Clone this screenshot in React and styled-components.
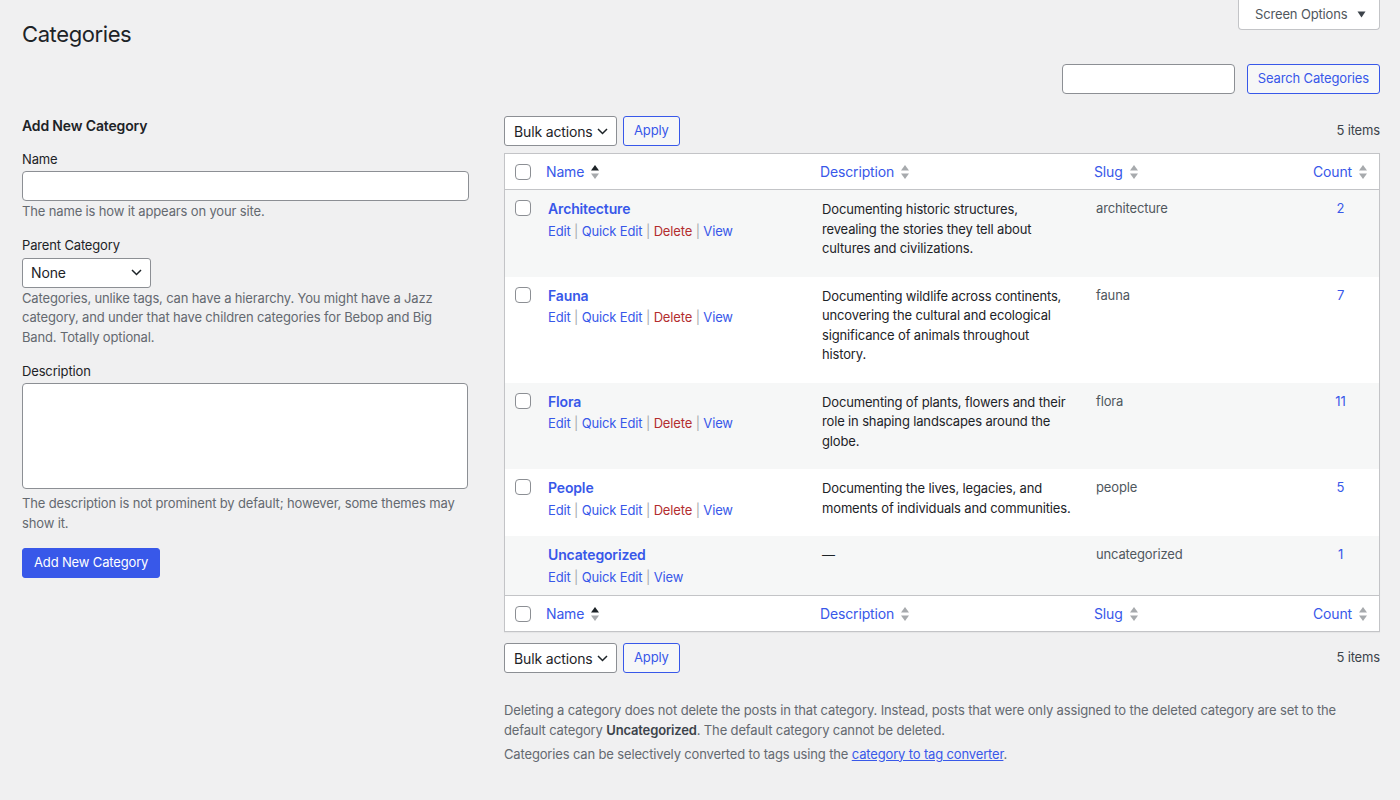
import React from 'react';
import styled, { createGlobalStyle } from 'styled-components';

// --- TOKENS ---
const c = {
  bg: '#f0f0f1',
  text: '#1d2327',
  body: '#3c434a',
  muted: '#646970',
  slug: '#50575e',
  link: '#3858e9',
  danger: '#b32d2e',
  border: '#c3c4c7',
  field: '#8c8f94',
  stripe: '#f6f7f7',
  sep: '#a7aaad',
};

const GlobalStyle = createGlobalStyle`
  * { box-sizing: border-box; }
  body {
    margin: 0; background: ${c.bg}; color: ${c.body};
    font-family: Inter, "Noto Sans", "Liberation Sans", sans-serif; font-size: 13px;
    line-height: 1.5; letter-spacing: -0.15px;
  }
  button, input, textarea { letter-spacing: inherit; }
`;

// --- STYLED COMPONENTS ---
const Page = styled.div` padding: 0 20px 40px 22px; min-height: 800px; `;
const TopRow = styled.div` display: flex; justify-content: space-between; align-items: flex-start; `;
const Title = styled.h1`
  margin: 19px 0 0; font-size: 22px; font-weight: 400; line-height: 30px; color: ${c.text};
  letter-spacing: -0.4px;
`;
const ScreenOptions = styled.button`
  display: flex; align-items: center; gap: 10px; height: 30px; width: 142px;
  padding: 0 0 0 16px; background: #fff; border: 1px solid ${c.border}; border-top: none;
  border-radius: 0 0 4px 4px; color: ${c.slug}; font: inherit; font-size: 13px;
`;
const SearchRow = styled.div` display: flex; justify-content: flex-end; gap: 12px; margin-top: 15px; `;
const TextInput = styled.input`
  height: ${p => p.$h || 30}px; width: ${p => p.$w || '100%'};
  border: 1px solid ${c.field}; border-radius: 4px; background: #fff;
  font: inherit; font-size: 14px; padding: 0 8px; display: block;
`;
const SecondaryButton = styled.button`
  height: 30px; padding: 0 ${p => p.$pad || 10}px; border: 1px solid ${c.link}; border-radius: 3px;
  background: ${c.stripe}; color: ${c.link}; font: inherit; font-size: 13px;
`;
const PrimaryButton = styled.button`
  height: 30px; padding: 0 11px; border: 1px solid ${c.link}; border-radius: 3px;
  background: ${c.link}; color: #fff; font: inherit; font-size: 13px;
`;
const Columns = styled.div`
  display: grid; grid-template-columns: 447px 1fr; gap: 35px; margin-top: 22px;
`;
const FormCol = styled.div``;
const FormTitle = styled.h2`
  margin: 0 0 13.5px; font-size: 14px; font-weight: 600; line-height: 20px; color: ${c.text};
`;
const Field = styled.div` margin-bottom: 14.5px; `;
const Label = styled.label` display: block; color: ${c.text}; line-height: 19.5px; margin-bottom: 2px; `;
const Hint = styled.p` margin: ${p => p.$top || 1}px 0 0; color: ${c.muted}; line-height: 19.5px; `;
const SelectBox = styled.div`
  display: flex; align-items: center; justify-content: space-between;
  width: ${p => p.$w}px; height: 30px; padding: 0 8px 0 ${p => p.$pl || 8}px;
  background: #fff; border: 1px solid ${c.field}; border-radius: 3px;
  font-size: 14px; color: ${c.text};
`;
const TextArea = styled.textarea`
  display: block; width: 446px; height: 106px; resize: none;
  border: 1px solid ${c.field}; border-radius: 4px; background: #fff;
`;

const ListCol = styled.div``;
const TableNav = styled.div`
  display: flex; align-items: center; gap: 6px; height: 30px;
`;
const Items = styled.span` margin-left: auto; color: ${c.body}; `;
const Table = styled.table`
  width: 100%; border-spacing: 0; table-layout: fixed; background: #fff;
  border: 1px solid ${c.border}; margin: ${p => p.$m || 0};
  box-shadow: 0 1px 1px rgba(0,0,0,0.04);
`;
const Th = styled.th`
  width: ${p => p.$w ? `${p.$w}px` : 'auto'};
  height: 36px; padding: 0 8px; text-align: ${p => p.$center ? 'center' : 'left'};
  font-weight: 400; vertical-align: middle;
  border-${p => p.$foot ? 'top' : 'bottom'}: 1px solid ${c.border};
`;
const CheckTh = styled(Th)` padding: 0 0 0 10px; `;
const SortLink = styled.a`
  display: inline-flex; align-items: center; gap: 6px; color: ${c.link}; font-size: 14px;
  text-decoration: none; line-height: 20px; padding-top: 1px;
`;
const Row = styled.tr` background: ${p => p.$striped ? c.stripe : '#fff'}; `;
const Td = styled.td`
  vertical-align: top; padding: 9px 10px 8px;
  color: ${p => p.$color || c.text}; line-height: 19.5px;
  text-align: ${p => p.$center ? 'center' : 'left'};
`;
const DescTd = styled(Td)` padding: 10px 14px 18px 10px; `;
const CheckTd = styled.td` vertical-align: top; padding: 10px 0 0 10px; `;
const Checkbox = styled.span`
  display: block; width: 16px; height: 16px; border: 1px solid ${c.field};
  border-radius: 4px; background: #fff;
`;
const RowTitle = styled.a`
  display: block; font-size: 14px; font-weight: 600; line-height: 19.6px;
  color: ${c.link}; text-decoration: none;
`;
const Actions = styled.div` padding-top: 3px; line-height: 19.5px; color: ${c.sep}; `;
const Action = styled.a` color: ${p => p.$danger ? c.danger : c.link}; text-decoration: none; `;
const CountLink = styled.a` color: ${c.link}; text-decoration: none; `;
const Notes = styled.div` margin-top: 28px; color: ${c.muted}; `;
const Note = styled.p` margin: 0 0 4.5px; line-height: 19.5px; `;
const Strong = styled.strong` font-weight: 600; color: ${c.body}; `;
const InlineLink = styled.a` color: ${c.link}; text-decoration: underline; `;

// --- ICONS ---
const SortIcon = ({ active }) => (
  <svg width="10" height="16" viewBox="0 0 10 16">
    <path d="M5 1 L9 6.5 H1 Z" fill={active ? c.text : c.sep} />
    <path d="M1 9.5 H9 L5 15 Z" fill={c.sep} />
  </svg>
);
const Chevron = () => (
  <svg width="11" height="7" viewBox="0 0 11 7">
    <path d="M1 1 L5.5 5.5 L10 1" fill="none" stroke={c.text} strokeWidth="1.5" />
  </svg>
);
const Caret = () => (
  <svg width="9" height="7" viewBox="0 0 9 7">
    <path d="M0.5 0.5 H8.5 L4.5 6.5 Z" fill={c.body} />
  </svg>
);

const rows = [
  { name: 'Architecture', desc: 'Documenting historic structures, revealing the stories they tell about cultures and civilizations.', slug: 'architecture', count: 2 },
  { name: 'Fauna', desc: 'Documenting wildlife across continents, uncovering the cultural and ecological significance of animals throughout history.', slug: 'fauna', count: 7 },
  { name: 'Flora', desc: 'Documenting of plants, flowers and their role in shaping landscapes around the globe.', slug: 'flora', count: 11 },
  { name: 'People', desc: 'Documenting the lives, legacies, and moments of individuals and communities.', slug: 'people', count: 5 },
  { name: 'Uncategorized', desc: '—', slug: 'uncategorized', count: 1, locked: true },
];

const HeadRow = ({ foot }) => (
  <tr>
    <CheckTh $w={33} $foot={foot}><Checkbox /></CheckTh>
    <Th $w={274} $foot={foot}><SortLink>Name <SortIcon active /></SortLink></Th>
    <Th $w={274} $foot={foot}><SortLink>Description <SortIcon /></SortLink></Th>
    <Th $w={216} $foot={foot}><SortLink>Slug <SortIcon /></SortLink></Th>
    <Th $foot={foot} $center><SortLink>Count <SortIcon /></SortLink></Th>
  </tr>
);

const BulkBar = () => (
  <TableNav>
    <SelectBox $w={113} $pl={9}>Bulk actions <Chevron /></SelectBox>
    <SecondaryButton>Apply</SecondaryButton>
    <Items>5 items</Items>
  </TableNav>
);

export default function App() {
  return (
    <Page>
      <GlobalStyle />
      <TopRow>
        <Title>Categories</Title>
        <ScreenOptions>Screen Options <Caret /></ScreenOptions>
      </TopRow>
      <SearchRow>
        <TextInput $w="173px" />
        <SecondaryButton>Search Categories</SecondaryButton>
      </SearchRow>

      <Columns>
        <FormCol>
          <FormTitle>Add New Category</FormTitle>
          <Field>
            <Label>Name</Label>
            <TextInput />
            <Hint>The name is how it appears on your site.</Hint>
          </Field>
          <Field>
            <Label>Parent Category</Label>
            <SelectBox $w={129}>None <Chevron /></SelectBox>
            <Hint>Categories, unlike tags, can have a hierarchy. You might have a Jazz category, and under that have children categories for Bebop and Big Band. Totally optional.</Hint>
          </Field>
          <Field>
            <Label>Description</Label>
            <TextArea />
            <Hint $top={5}>The description is not prominent by default; however, some themes may show it.</Hint>
          </Field>
          <PrimaryButton>Add New Category</PrimaryButton>
        </FormCol>

        <ListCol>
          <BulkBar />
          <Table $m="7px 0 11px">
            <thead><HeadRow /></thead>
            <tbody>
              {rows.map((r, i) => (
                <Row key={r.slug} $striped={i % 2 === 0}>
                  <CheckTd>{!r.locked && <Checkbox />}</CheckTd>
                  <Td>
                    <RowTitle>{r.name}</RowTitle>
                    <Actions>
                      <Action>Edit</Action> | <Action>Quick Edit</Action> |{' '}
                      {!r.locked && <><Action $danger>Delete</Action> | </>}
                      <Action>View</Action>
                    </Actions>
                  </Td>
                  <DescTd>{r.desc}</DescTd>
                  <Td $color={c.slug}>{r.slug}</Td>
                  <Td $center><CountLink>{r.count}</CountLink></Td>
                </Row>
              ))}
            </tbody>
            <tfoot><HeadRow foot /></tfoot>
          </Table>
          <BulkBar />
          <Notes>
            <Note>Deleting a category does not delete the posts in that category. Instead, posts that were only assigned to the deleted category are set to the default category <Strong>Uncategorized</Strong>. The default category cannot be deleted.</Note>
            <Note>Categories can be selectively converted to tags using the <InlineLink>category to tag converter</InlineLink>.</Note>
          </Notes>
        </ListCol>
      </Columns>
    </Page>
  );
}
